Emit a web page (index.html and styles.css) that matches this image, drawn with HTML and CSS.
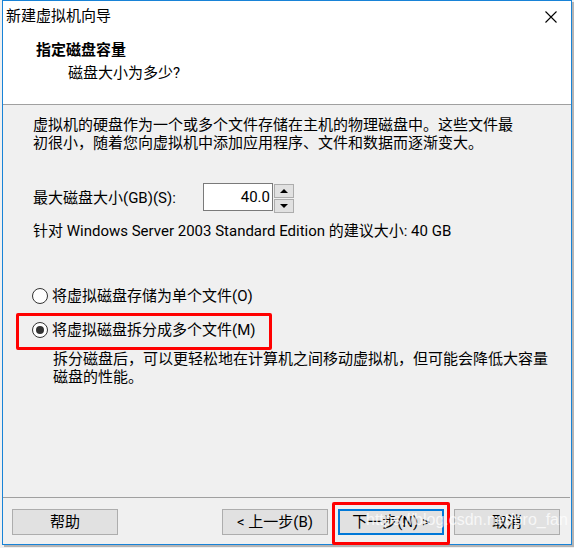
FILE: index.html
```html
<!DOCTYPE html>
<html lang="zh-CN">
<head>
<meta charset="utf-8">
<title>新建虚拟机向导</title>
<link rel="stylesheet" href="styles.css">
</head>
<body>
<div class="window">
  <div class="top">
    <div class="titlebar">
      <span class="title">新建虚拟机向导</span>
      <svg class="close" width="12" height="12" viewBox="0 0 12 12"><path d="M0.5 0.5L11.5 11.5M11.5 0.5L0.5 11.5" stroke="#000" stroke-width="1.1" fill="none"/></svg>
    </div>
    <div class="header">
      <div class="h-title">指定磁盘容量</div>
      <div class="h-sub">磁盘大小为多少?</div>
    </div>
  </div>
  <div class="content">
    <p class="para">虚拟机的硬盘作为一个或多个文件存储在主机的物理磁盘中。这些文件最<br>初很小，随着您向虚拟机中添加应用程序、文件和数据而逐渐变大。</p>
    <div class="size-row">
      <span class="size-label">最大磁盘大小(GB)(S):</span>
      <div class="spin">
        <div class="spin-input">40.0</div>
        <div class="spin-btns">
          <div class="spin-btn"><span class="arrow-up"></span></div>
          <div class="spin-btn"><span class="arrow-down"></span></div>
        </div>
      </div>
    </div>
    <p class="recommend">针对 Windows Server 2003 Standard Edition 的建议大小: 40 GB</p>
    <div class="radios">
      <div class="radio-row">
        <span class="radio"></span>
        <span>将虚拟磁盘存储为单个文件(O)</span>
      </div>
      <div class="radio-row marked">
        <span class="radio checked"></span>
        <span>将虚拟磁盘拆分成多个文件(M)</span>
        <span class="red-box"></span>
      </div>
      <p class="desc">拆分磁盘后，可以更轻松地在计算机之间移动虚拟机，但可能会降低大容量<br>磁盘的性能。</p>
    </div>
  </div>
  <div class="footer">
    <button class="btn">帮助</button>
    <div class="nav">
      <button class="btn">&lt; 上一步(B)</button>
      <button class="btn default">下一步(N) &gt;<span class="red-box2"></span></button>
      <button class="btn">取消</button>
    </div>
  </div>
  <div class="watermark">https://blog.csdn.net/pro_fan</div>
</div>
</body>
</html>
```

FILE: styles.css
```css
html, body {
  margin: 0;
  padding: 0;
}
body {
  background: #f0f0f0;
  width: 574px;
  height: 548px;
  overflow: hidden;
  font-family: Roboto, "Noto Sans CJK SC", sans-serif;
  font-size: 15px;
  color: #000;
}
.window {
  position: relative;
  margin-left: 2px;
  width: 570px;
  height: 545px;
  box-sizing: border-box;
  border: 1px solid #1883d7;
  background: #f0f0f0;
  box-shadow: 2px 2px 0 #b4b4b4;
  display: flex;
  flex-direction: column;
}
.top {
  background: #fff;
  border-bottom: 1px solid #a0a0a0;
}
.titlebar {
  height: 31px;
  display: flex;
  align-items: center;
  justify-content: space-between;
  padding: 0 14px 0 3px;
}
.title {
  line-height: 20px;
  margin-top: -1px;
}
.close {
  display: block;
}
.header {
  height: 64px;
  padding-top: 8px;
  padding-left: 33px;
}
.h-title {
  font-weight: bold;
  line-height: 20px;
}
.h-sub {
  line-height: 20px;
  margin-top: 3px;
  padding-left: 32px;
}
.content {
  flex: 1;
  padding: 11px 0 0 30px;
}
.para {
  margin: 0;
  line-height: 18px;
}
.size-row {
  display: flex;
  align-items: center;
  margin-top: 32px;
  height: 28px;
}
.size-label {
  width: 170px;
  line-height: 18px;
}
.spin {
  display: flex;
}
.spin-input {
  width: 66px;
  height: 26px;
  border: 1px solid #7a7a7a;
  background: #fff;
  text-align: right;
  line-height: 26px;
  padding-right: 2px;
  box-sizing: content-box;
}
.spin-btns {
  display: flex;
  flex-direction: column;
  gap: 1px;
  margin-left: 1px;
  padding-top: 1px;
}
.spin-btn {
  width: 18px;
  height: 12px;
  border: 1px solid #adadad;
  background: #e1e1e1;
  display: flex;
  align-items: center;
  justify-content: center;
}
.arrow-up {
  width: 0;
  height: 0;
  border-left: 4px solid transparent;
  border-right: 4px solid transparent;
  border-bottom: 4px solid #000;
}
.arrow-down {
  width: 0;
  height: 0;
  border-left: 4px solid transparent;
  border-right: 4px solid transparent;
  border-top: 4px solid #000;
}
.recommend {
  margin: 10px 0 0;
  line-height: 18px;
}
.radios {
  margin-top: 47px;
}
.radio-row {
  position: relative;
  display: flex;
  align-items: center;
  gap: 4px;
  line-height: 18px;
  margin-left: -1px;
}
.radio-row + .radio-row {
  margin-top: 16px;
}
.radio {
  width: 14px;
  height: 14px;
  border: 1px solid #333;
  border-radius: 50%;
  background: #fff;
  box-sizing: content-box;
  display: flex;
  align-items: center;
  justify-content: center;
}
.radio.checked::after {
  content: "";
  width: 8px;
  height: 8px;
  border-radius: 50%;
  background: #333;
}
.red-box {
  position: absolute;
  left: -16px;
  top: -8px;
  width: 256px;
  height: 37px;
  box-sizing: border-box;
  border: 3px solid #f00;
  border-radius: 2px;
}
.desc {
  margin: 11px 0 0 20px;
  line-height: 18px;
}
.footer {
  border-top: 1px solid #a0a0a0;
  margin-right: 1px;
  padding: 11px 10px 9px 9px;
  display: flex;
  justify-content: space-between;
}
.nav {
  display: flex;
  gap: 10px;
}
.btn {
  position: relative;
  width: 106px;
  height: 26px;
  border: 1px solid #adadad;
  background: #e1e1e1;
  font-family: Roboto, "Noto Sans CJK SC", sans-serif;
  font-size: 15px;
  color: #000;
  padding: 0;
  line-height: 22px;
}
.btn.default {
  border: 2px solid #0078d7;
}
.red-box2 {
  position: absolute;
  left: -8px;
  top: -9px;
  width: 118px;
  height: 43px;
  box-sizing: border-box;
  border: 3px solid #f00;
  border-radius: 2px;
}
.watermark {
  position: absolute;
  left: 363px;
  top: 510px;
  font-family: "Liberation Sans", sans-serif;
  font-size: 16px;
  color: rgba(255, 255, 255, 0.75);
  pointer-events: none;
}
```
